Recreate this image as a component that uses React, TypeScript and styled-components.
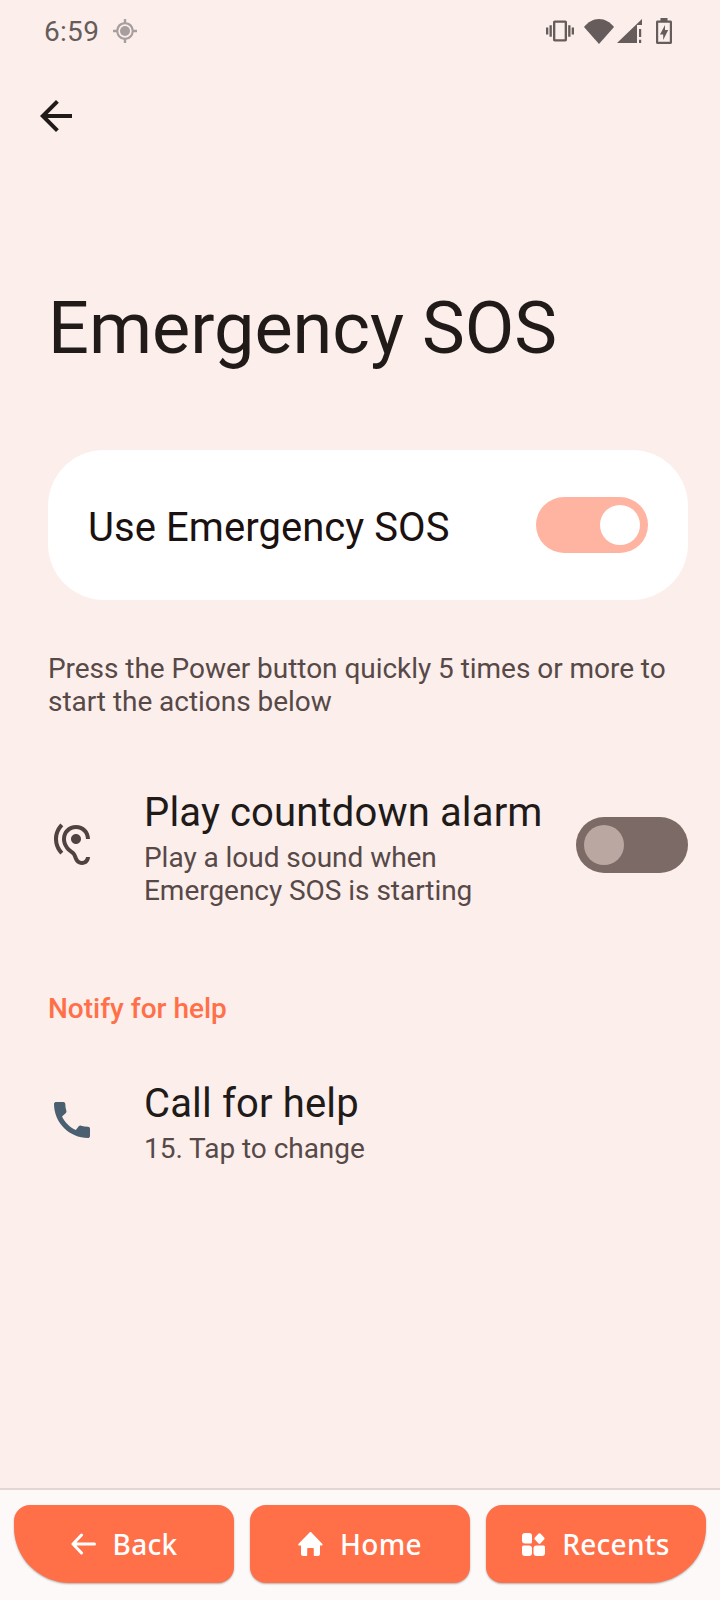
import React from "react";
import styled, { createGlobalStyle } from "styled-components";

const Global = createGlobalStyle`
  html, body { margin: 0; padding: 0; background: #fceeeb; }
  body { font-family: Roboto, "Liberation Sans", sans-serif; }
`;

const Screen = styled.div`
  width: 720px;
  height: 1600px;
  display: flex;
  flex-direction: column;
  background: #fceeeb;
  overflow: hidden;
`;

const StatusBar = styled.div`
  height: 62px;
  display: flex;
  align-items: center;
  justify-content: space-between;
  padding: 0 48px 0 44px;
  box-sizing: border-box;
  color: #655c5b;
`;
const StatusLeft = styled.div`
  display: flex;
  align-items: center;
  gap: 14px;
`;
const Time = styled.span`
  font-size: 28px;
  line-height: 62px;
  letter-spacing: 0.3px;
  padding-top: 2px;
`;
const StatusRight = styled.div`
  display: flex;
  align-items: center;
`;
const StatusSlot = styled.div<{ $left: number }>`
  margin-left: ${(p) => p.$left}px;
`;

const BackBar = styled.div`
  height: 108px;
  padding: 0 0 0 32px;
  display: flex;
  align-items: center;
  color: #201a19;
`;

const Title = styled.h1`
  margin: 0;
  padding: 114px 0 0 48px;
  font-size: 72px;
  font-weight: 400;
  line-height: 90px;
  color: #201a19;
`;

const MainCard = styled.div`
  margin: 76px 32px 0 48px;
  height: 150px;
  border-radius: 56px;
  background: #fff;
  display: flex;
  align-items: center;
  justify-content: space-between;
  padding: 0 40px;
`;
const MainLabel = styled.span`
  font-size: 40px;
  letter-spacing: 0.06px;
  padding-top: 4px;
  color: #1a1110;
`;

const Track = styled.div<{ $on?: boolean }>`
  width: 112px;
  height: 56px;
  flex: none;
  border-radius: 28px;
  box-sizing: border-box;
  padding: 8px;
  display: flex;
  justify-content: ${(p) => (p.$on ? "flex-end" : "flex-start")};
  background: ${(p) => (p.$on ? "#ffb4a2" : "#7b6a66")};
`;
const Thumb = styled.div<{ $on?: boolean }>`
  width: 40px;
  height: 40px;
  border-radius: 50%;
  background: ${(p) => (p.$on ? "#fff" : "#baa7a2")};
`;

const Description = styled.p`
  margin: 52px 32px 0 48px;
  font-size: 28px;
  line-height: 33px;
  letter-spacing: -0.04px;
  color: #564947;
`;

const Row = styled.div<{ $top: number }>`
  margin: ${(p) => p.$top}px 32px 0 48px;
  display: flex;
  align-items: center;
`;
const RowIcon = styled.div<{ $color: string }>`
  width: 48px;
  height: 48px;
  flex: none;
  margin-right: 48px;
  color: ${(p) => p.$color};
`;
const RowBody = styled.div`
  flex: 1;
  min-width: 0;
`;
const RowTitle = styled.div`
  font-size: 40px;
  line-height: 56px;
  letter-spacing: 0.15px;
  color: #201a19;
`;
const RowSub = styled.div`
  font-size: 28px;
  line-height: 33px;
  letter-spacing: -0.04px;
  margin-bottom: -2px;
  color: #564947;
`;

const SectionHead = styled.div`
  margin: 87px 0 0 48px;
  font-size: 28px;
  line-height: 33px;
  font-weight: 500;
  color: #ff7049;
`;

const Spacer = styled.div`
  flex: 1;
`;

const NavBar = styled.nav`
  height: 112px;
  border-top: 2px solid #e3d6d3;
  background: #fdf9f9;
  box-sizing: border-box;
  padding: 15px 14px 0;
  display: flex;
  gap: 16px;
`;
const NavButton = styled.button<{ $shape: string }>`
  flex: 1;
  height: 78px;
  border: none;
  padding: 0;
  background: #ff7049;
  color: #fff;
  font-family: "Noto Sans", Roboto, sans-serif;
  font-size: 28px;
  font-weight: 500;
  letter-spacing: 0.3px;
  border-radius: ${(p) => p.$shape};
  box-shadow: 0 1px 2px rgba(0, 0, 0, 0.3);
  display: flex;
  align-items: center;
  justify-content: center;
  gap: 17px;
`;

const Svg = ({ size, d }: { size: number; d: string }) => (
  <svg width={size} height={size} viewBox="0 0 24 24" fill="currentColor" style={{ display: "block" }}>
    <path d={d} />
  </svg>
);

const ICON = {
  vibrate:
    "M0 15h2V9H0v6zm3 2h2V7H3v10zm19-8v6h2V9h-2zm-3 8h2V7h-2v10zM16.5 3h-9C6.67 3 6 3.67 6 4.5v15c0 .83.67 1.5 1.5 1.5h9c.83 0 1.5-.67 1.5-1.5v-15c0-.83-.67-1.5-1.5-1.5zM16 19H8V5h8v14z",
  hearing:
    "M17 20c-.29 0-.56-.06-.76-.15-.71-.37-1.210-.88-1.710-2.380-.51-1.560-1.470-2.290-2.390-3-.79-.61-1.610-1.240-2.320-2.530C9.290 10.980 9 9.930 9 9c0-2.800 2.200-5 5-5s5 2.200 5 5h2c0-3.930-3.070-7-7-7S7 5.070 7 9c0 1.260.38 2.650 1.070 3.900.91 1.650 1.980 2.480 2.850 3.150.81.62 1.390 1.070 1.710 2.050.6 1.820 1.370 2.840 2.730 3.550.51.23 1.070.35 1.640.35 2.210 0 4-1.790 4-4h-2c0 1.100-.9 2-2 2zM7.640 2.640 6.220 1.220C4.230 3.210 3 5.960 3 9s1.230 5.790 3.220 7.780l1.410-1.410C6.010 13.740 5 11.490 5 9s1.010-4.740 2.640-6.360zM11.500 9c0 1.380 1.120 2.500 2.500 2.500s2.500-1.120 2.500-2.500-1.120-2.500-2.500-2.500-2.500 1.120-2.500 2.500z",
  phone:
    "M20.010 15.380c-1.230 0-2.420-.2-3.530-.56-.35-.12-.74-.03-1.010.24l-1.570 1.970c-2.830-1.350-5.480-3.900-6.890-6.830l1.950-1.660c.27-.28.35-.67.24-1.020-.37-1.110-.56-2.300-.56-3.530 0-.54-.45-.99-.99-.99H4.190C3.650 3 3 3.240 3 3.990 3 13.280 10.730 21 20.010 21c.71 0 .99-.63.99-1.180v-3.450c0-.54-.45-.99-.99-.99z",
  arrowBack: "M20 11H7.830l5.590-5.590L12 4l-8 8 8 8 1.410-1.410L7.830 13H20v-2z",
};

const WifiIcon = () => (
  <svg width="30" height="25" viewBox="0 0 30 25" fill="currentColor" style={{ display: "block" }}>
    <path d="M15 25 0 8C4 3 9 0 15 0s11 3 15 8z" />
  </svg>
);
const SignalIcon = () => (
  <svg width="25" height="24" viewBox="0 0 25 24" fill="currentColor" style={{ display: "block" }}>
    <path d="M0 24 25 0v6h-5v18z" />
    <path d="M22 10h2.200v8H22zM22 20.800h2.200V24H22z" />
  </svg>
);
const BatteryIcon = () => (
  <svg width="16" height="26" viewBox="0 0 16 26" style={{ display: "block" }} fill="currentColor">
    <path
      fillRule="evenodd"
      d="M4.500 0h7v2.500H14.500c.8 0 1.500.7 1.500 1.500v20.500c0 .8-.7 1.500-1.500 1.500h-13C.7 26 0 25.300 0 24.500V4c0-.8.7-1.500 1.500-1.500h3zM2.200 4.700v19.100h11.600V4.700zM9 7l-5 9.500h3.200V22l5-10H9z"
    />
  </svg>
);
const HomeIcon = () => (
  <svg width="25" height="24" viewBox="0 0 25 24" fill="currentColor" style={{ display: "block" }}>
    <path d="M12.500 0c.4 0 .7.2.9.4l10.800 11.300c.7.700.3 1.800-.7 1.800H22v8.500c0 1.300-1 2-2 2h-3.200c-.6 0-1-.4-1-1v-6c0-.6-.4-1-1-1h-4.600c-.6 0-1 .4-1 1v6c0 .6-.4 1-1 1H5c-1 0-2-.7-2-2v-8.500H1.300c-1 0-1.400-1.100-.7-1.800L11.600.4c.2-.2.500-.4.900-.4z" />
  </svg>
);
const RecentsIcon = () => (
  <svg width="23" height="23" viewBox="0 0 23 23" fill="currentColor" style={{ display: "block" }}>
    <path d="M3 0h4a3 3 0 0 1 3 3v6a1.500 1.500 0 0 1-1.500 1.500H3a3 3 0 0 1-3-3V3a3 3 0 0 1 3-3z" />
    <path d="M17.500 0.200c.5 0 .9.2 1.200.6l3.400 3.600c.6.600.6 1.600 0 2.200l-3.400 3.600c-.7.700-1.700.7-2.400 0l-3.400-3.600c-.6-.6-.6-1.600 0-2.200L16.300.8c.3-.4.700-.6 1.200-.6z" />
    <path d="M1.500 12.500H7a3 3 0 0 1 3 3V20a3 3 0 0 1-3 3H3a3 3 0 0 1-3-3v-6a1.500 1.500 0 0 1 1.500-1.500z" />
    <path d="M14.500 12.500H21.500A1.500 1.500 0 0 1 23 14v6a3 3 0 0 1-3 3h-5.500a3 3 0 0 1-3-3v-4.500a3 3 0 0 1 3-3z" />
  </svg>
);
const NavBack = () => (
  <svg width="25" height="22" viewBox="0 0 25 22" fill="none" stroke="currentColor" strokeWidth="3" strokeLinecap="round" strokeLinejoin="round" style={{ display: "block" }}>
    <path d="M23.500 11H2M10.500 2 2 11l8.500 9" />
  </svg>
);

const Target = () => (
  <svg width="24" height="24" viewBox="0 0 24 24" style={{ display: "block" }} fill="#a79e9d">
    <circle cx="12" cy="12" r="5" />
    <path
      fillRule="evenodd"
      d="M10.800 0h2.400v3.300A8.800 8.800 0 0 1 20.700 10.800H24v2.400h-3.300A8.800 8.800 0 0 1 13.200 20.700V24h-2.400v-3.300A8.800 8.800 0 0 1 3.300 13.200H0v-2.400h3.300A8.800 8.800 0 0 1 10.800 3.300zM12 5.300a6.700 6.700 0 1 0 0 13.400 6.700 6.700 0 0 0 0-13.400z"
    />
  </svg>
);

export default function App() {
  return (
    <Screen>
      <Global />
      <StatusBar>
        <StatusLeft>
          <Time>6:59</Time>
          <Target />
        </StatusLeft>
        <StatusRight>
          <StatusSlot $left={0}>
            <Svg size={28} d={ICON.vibrate} />
          </StatusSlot>
          <StatusSlot $left={10}>
            <WifiIcon />
          </StatusSlot>
          <StatusSlot $left={3}>
            <SignalIcon />
          </StatusSlot>
          <StatusSlot $left={14}>
            <BatteryIcon />
          </StatusSlot>
        </StatusRight>
      </StatusBar>
      <BackBar>
        <Svg size={48} d={ICON.arrowBack} />
      </BackBar>
      <Title>Emergency SOS</Title>
      <MainCard>
        <MainLabel>Use Emergency SOS</MainLabel>
        <Track $on>
          <Thumb $on />
        </Track>
      </MainCard>
      <Description>
        Press the Power button quickly 5 times or more to
        <br />
        start the actions below
      </Description>
      <Row $top={67}>
        <RowIcon $color="#4f4341">
          <Svg size={48} d={ICON.hearing} />
        </RowIcon>
        <RowBody>
          <RowTitle>Play countdown alarm</RowTitle>
          <RowSub>
            Play a loud sound when
            <br />
            Emergency SOS is starting
          </RowSub>
        </RowBody>
        <Track>
          <Thumb />
        </Track>
      </Row>
      <SectionHead>Notify for help</SectionHead>
      <Row $top={51}>
        <RowIcon $color="#4a6070">
          <Svg size={48} d={ICON.phone} />
        </RowIcon>
        <RowBody>
          <RowTitle>Call for help</RowTitle>
          <RowSub>15. Tap to change</RowSub>
        </RowBody>
      </Row>
      <Spacer />
      <NavBar>
        <NavButton $shape="16px 16px 16px 56px">
          <NavBack />
          Back
        </NavButton>
        <NavButton $shape="16px">
          <HomeIcon />
          Home
        </NavButton>
        <NavButton $shape="16px 16px 56px 16px">
          <RecentsIcon />
          Recents
        </NavButton>
      </NavBar>
    </Screen>
  );
}
